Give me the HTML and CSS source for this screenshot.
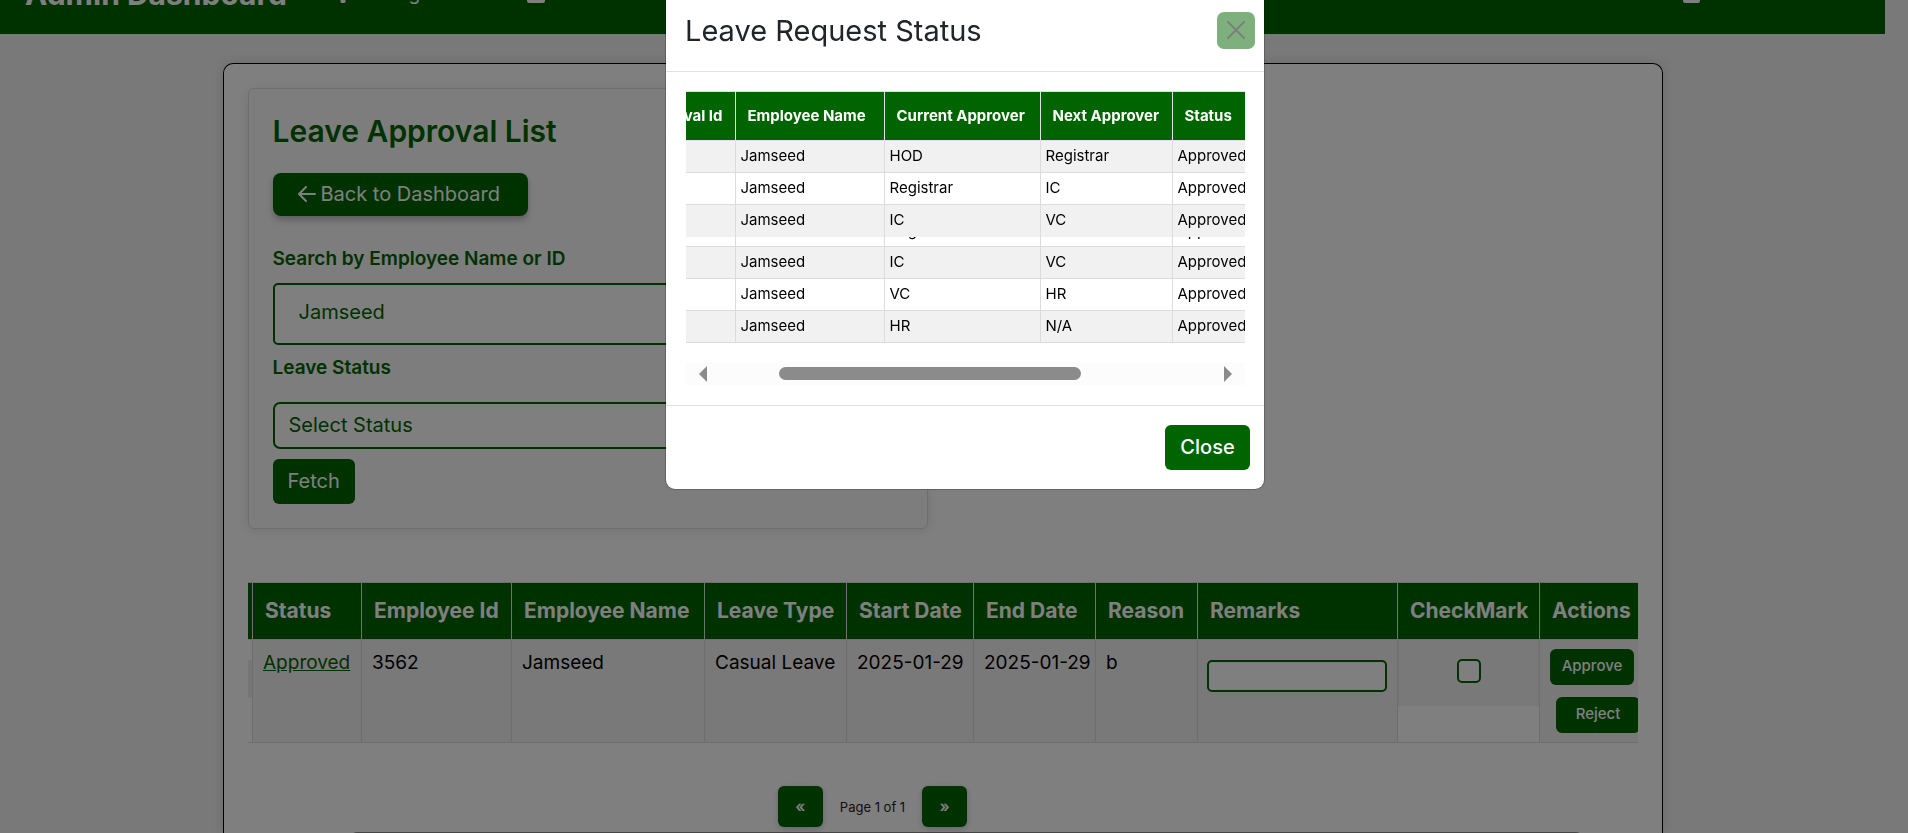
FILE: index.html
```html
<!DOCTYPE html>
<html lang="en">
<head>
<meta charset="utf-8">
<title>Leave Approval List</title>
<link rel="stylesheet" href="styles.css">
</head>
<body>
<div class="page">
  <header class="navbar">
    <a class="brand" href="#">Admin Dashboard</a>
    <nav class="nav-links">
      <a href="#"><svg width="16" height="18" viewBox="0 0 16 18"><path d="M8 0a6 6 0 0 1 2.500 11v5.500a1.500 1.500 0 0 1-1.500 1.500H7a1.500 1.500 0 0 1-1.500-1.500V11A6 6 0 0 1 8 0z" fill="currentColor"/></svg>Management</a>
      <a href="#"><svg width="18" height="18" viewBox="0 0 18 18"><rect width="18" height="18" rx="2" fill="currentColor"/></svg>Attendance</a>
    </nav>
    <a class="nav-end" href="#"><svg width="17" height="18" viewBox="0 0 17 18"><rect width="17" height="18" rx="2" fill="currentColor"/></svg>Leave Details</a>
  </header>
  <main class="panel">
    <form class="filters">
      <h1>Leave Approval List</h1>
      <button type="button" class="btn back"><svg width="18" height="16" viewBox="0 0 18 16" fill="none" stroke="currentColor" stroke-width="2" stroke-linecap="round" stroke-linejoin="round"><path d="M8 1 1 8l7 7M1 8h16"/></svg>Back to Dashboard</button>
      <label for="employee">Search by Employee Name or ID</label>
      <input id="employee" class="search" type="text" value="Jamseed">
      <label for="status" class="status-label">Leave Status</label>
      <select id="status" class="status"><option>Select Status</option></select>
      <button type="button" class="btn fetch">Fetch</button>
    </form>
    <div class="table-wrap">
      <table class="leave-table">
        <colgroup><col class="c-edge"><col class="c-status"><col class="c-id"><col class="c-name"><col class="c-type"><col class="c-start"><col class="c-end"><col class="c-reason"><col class="c-remarks"><col class="c-check"><col class="c-actions"></colgroup>
        <thead><tr><th></th><th>Status</th><th>Employee Id</th><th>Employee Name</th><th>Leave Type</th><th>Start Date</th><th>End Date</th><th>Reason</th><th>Remarks</th><th>CheckMark</th><th>Actions</th></tr></thead>
        <tbody><tr>
          <td class="edge"><div class="edge-block"></div></td>
          <td><a href="#">Approved</a></td><td>3562</td><td>Jamseed</td><td>Casual Leave</td><td>2025-01-29</td><td>2025-01-29</td><td>b</td>
          <td class="remarks-cell"><input class="remarks" type="text" aria-label="Remarks"></td>
          <td class="check-cell"><div class="check-box"><input type="checkbox" aria-label="CheckMark"></div></td>
          <td class="actions-cell"><div class="actions"><button type="button" class="btn small">Approve</button><button type="button" class="btn small reject">Reject</button></div></td>
        </tr></tbody>
      </table>
    </div>
    <div class="pager">
      <button type="button" class="btn page-btn" aria-label="Previous">«</button>
      <span>Page 1 of 1</span>
      <button type="button" class="btn page-btn" aria-label="Next">»</button>
    </div>
    <div class="page-scroll"><i></i></div>
  </main>
</div>
<div class="backdrop"></div>
<section class="modal" role="dialog" aria-labelledby="modal-title">
  <div class="modal-head">
    <h2 id="modal-title">Leave Request Status</h2>
    <button type="button" class="dismiss" aria-label="Close"><svg width="18" height="18" viewBox="0 0 18 18" fill="none" stroke="#000" stroke-width="2" stroke-linecap="round"><path d="m1 1 16 16M17 1 1 17"/></svg></button>
  </div>
  <div class="modal-body">
    <div class="approval-wrap">
      <table class="approval">
        <colgroup><col class="a-id"><col class="a-name"><col class="a-current"><col class="a-next"><col class="a-status"></colgroup>
        <thead><tr><th class="cut">Approval Id</th><th>Employee Name</th><th>Current Approver</th><th>Next Approver</th><th>Status</th></tr></thead>
        <tbody>
          <tr><td></td><td>Jamseed</td><td>HOD</td><td>Registrar</td><td>Approved</td></tr>
          <tr><td></td><td>Jamseed</td><td>Registrar</td><td>IC</td><td>Approved</td></tr>
          <tr class="open"><td></td><td>Jamseed</td><td>IC</td><td>VC</td><td>Approved</td></tr>
          <tr class="partial"><td></td><td><div>Jamseed</div></td><td><div>Registrar</div></td><td><div>IC</div></td><td><div>Approved</div></td></tr>
          <tr><td></td><td>Jamseed</td><td>IC</td><td>VC</td><td>Approved</td></tr>
          <tr><td></td><td>Jamseed</td><td>VC</td><td>HR</td><td>Approved</td></tr>
          <tr><td></td><td>Jamseed</td><td>HR</td><td>N/A</td><td>Approved</td></tr>
        </tbody>
      </table>
    </div>
    <div class="scrollbar">
      <svg width="8" height="16" viewBox="0 0 8 16"><path d="M8 0v16L0 8z" fill="#8b8b8b"/></svg>
      <div class="track"><div class="thumb"></div></div>
      <svg width="8" height="16" viewBox="0 0 8 16"><path d="M0 0v16l8-8z" fill="#8b8b8b"/></svg>
    </div>
  </div>
  <div class="modal-foot"><button type="button" class="btn close">Close</button></div>
</section>
</body>
</html>
```
FILE: styles.css
```css
* { box-sizing: border-box; }
body { margin: 0; background: #f2f2f2; font-family: Inter, "Open Sans", sans-serif; font-size: 19px; color: #000; }
button, input, select { font: inherit; }
.page { display: flex; flex-direction: column; height: 100vh; overflow: hidden; padding-right: 23px; }
.navbar { flex: none; height: 100px; margin-top: -66px; padding: 19px 25px 0; display: flex; align-items: center; background: #006400; color: #fff; }
.navbar a { color: #fff; text-decoration: none; white-space: nowrap; }
.brand { font-size: 30px; font-weight: 700; }
.nav-links { display: flex; flex: 1; gap: 50px; padding-left: 48px; }
.nav-links a, .nav-end { display: flex; gap: 8px; align-items: center; }
.navbar .nav-end { margin-right: 32px; }
.panel { flex: 1; min-height: 0; overflow: hidden; width: 1440px; max-width: 100%; margin: 29px auto 0; padding: 24px 24px 0; background: #fff; border: 1px solid #000; border-bottom: 0; border-radius: 10px 10px 0 0; box-shadow: 0 0 12px rgba(0, 0, 0, .12); }
.filters { width: 680px; padding: 24px; border: 1px solid #dcdcdc; border-radius: 6px; background: #fafafa; box-shadow: 0 2px 12px rgba(0, 0, 0, .1); display: flex; flex-direction: column; align-items: flex-start; }
h1 { margin: 0; font-size: 30px; line-height: 36px; font-weight: 600; color: #006400; }
.btn { border: 0; border-radius: 6px; background: #006400; color: #fff; }
.back { display: flex; align-items: center; gap: 5px; height: 43px; margin: 24px 0 28px; padding: 0 28px 1px 25px; font-size: 20px; border-radius: 8px; box-shadow: 0 4px 6px rgba(0, 0, 0, .25); }
.filters label { font-weight: 600; line-height: 30px; color: #006400; }
.search, .status { width: 100%; border: 2px solid #006400; background: #fff; color: #006400; font-size: 20px; }
.search { height: 62px; margin: 9px 0 8px; padding: 0 24px 4px; border-radius: 5px; }
.status { height: 47px; margin: 19px 0 10px; padding: 0 14px 2px; border-radius: 7px; appearance: none; }
.fetch { height: 45px; padding: 0 15px 2px; font-size: 20px; }
.table-wrap { margin-top: 53px; overflow: hidden; }
table { border-collapse: collapse; table-layout: fixed; white-space: nowrap; }
.leave-table { width: 1401px; }
.c-edge { width: 5px; } .c-status { width: 109px; } .c-id { width: 150px; } .c-name { width: 193px; } .c-type { width: 142px; }
.c-start { width: 127px; } .c-end { width: 122px; } .c-reason { width: 102px; } .c-remarks { width: 200px; } .c-check { width: 142px; } .c-actions { width: 109px; }
th { background: #006400; color: #fff; font-weight: 700; border: 1px solid #dee2e6; }
td { border: 1px solid #dcdcdc; }
.leave-table th { height: 57px; padding: 0 0 1px 12px; text-align: left; font-size: 21px; }
.leave-table td { height: 103px; padding: 8px 0 0 10px; vertical-align: top; line-height: 30px; background: #f2f2f2; }
.leave-table th:first-child, .leave-table .edge { padding: 0; border-left: 0; }
.leave-table .edge { background: #fff; padding-top: 20px; }
.edge-block { height: 38px; background: #ececec; }
td a { color: #006400; }
.leave-table .remarks-cell { padding: 20px 10px 0 9px; }
.remarks { display: block; width: 100%; height: 32px; border: 2px solid #006400; border-radius: 5px; background: #fff; }
.leave-table .check-cell { padding: 0; background: #fff; }
.check-box { height: 66px; padding-top: 19px; background: #f2f2f2; text-align: center; border: solid #e6e6e6; border-width: 0 1px; line-height: 0; }
.check-box input { appearance: none; width: 24px; height: 24px; margin: 0; border: 2px solid #006400; border-radius: 5px; background: #fff; }
.leave-table .actions-cell { padding-top: 9px; }
.actions { display: flex; flex-direction: column; align-items: flex-start; gap: 12px; }
.small { width: 84px; height: 36px; padding: 0 0 2px; font-size: 15px; font-weight: 500; }
.reject { margin-left: 6px; }
.pager { display: flex; align-items: center; justify-content: center; gap: 17px; margin: 43px 140px 0 0; font-size: 13px; color: #212529; }
.page-btn { width: 45px; height: 41px; padding: 0 0 2px; font-size: 16px; font-weight: 600; box-shadow: 0 2px 6px rgba(0, 0, 0, .2); }
.page-scroll { padding: 5px 55px 0 102px; }
.page-scroll i { display: block; height: 14px; border-radius: 7px; background: #8b8b8b; }
.backdrop { position: fixed; inset: 0; background: rgba(0, 0, 0, .5); }
.modal { position: absolute; top: -12px; left: 666px; width: 598px; background: #fff; border-radius: 9px; box-shadow: 0 0 0 1px rgba(0, 0, 0, .2); overflow: hidden; }
.modal-head { display: flex; align-items: center; justify-content: space-between; height: 84px; padding: 1px 9px 0 19px; border-bottom: 1px solid #dee2e6; }
h2 { margin: 0; font-size: 29px; font-weight: 400; color: #212529; }
.dismiss { display: flex; align-items: center; justify-content: center; width: 38px; height: 37px; padding: 0; border: 0; border-radius: 7px; background: #006400; opacity: .5; }
.modal-body { padding: 19px 19px 20px 20px; }
.approval-wrap { overflow: hidden; }
.approval { width: 564px; font-size: 15px; }
.a-id { width: 49px; } .a-name { width: 149px; } .a-current { width: 156px; } .a-next { width: 132px; } .a-status { width: 78px; }
.approval th { height: 49px; padding: 0 0 1px 12px; text-align: left; font-size: 15px; }
.approval .cut { direction: rtl; padding: 0 12px 1px 0; text-align: right; overflow: hidden; }
.approval td { height: 32px; padding: 0 0 1px 5px; line-height: 30px; overflow: hidden; }
.approval tr > :first-child { border-left: 0; }
.approval tbody tr:nth-child(odd) { background: #f1f1f1; }
.approval .open td { border-bottom: 0; }
.approval .partial td { height: 10px; padding-bottom: 0; border-top: 0; }
.partial div { display: flex; align-items: flex-end; height: 9px; overflow: hidden; }
.scrollbar { display: flex; align-items: center; height: 23px; margin-top: 19px; padding: 0 13px; background: #fcfcfc; }
.track { flex: 1; padding: 0 143px 0 72px; }
.thumb { height: 13px; border-radius: 7px; background: #8b8b8b; }
.modal-foot { display: flex; justify-content: flex-end; padding: 19px 14px; border-top: 1px solid #dee2e6; }
.close { height: 45px; width: 85px; padding: 0 0 2px; font-size: 20px; font-weight: 500; }
```
